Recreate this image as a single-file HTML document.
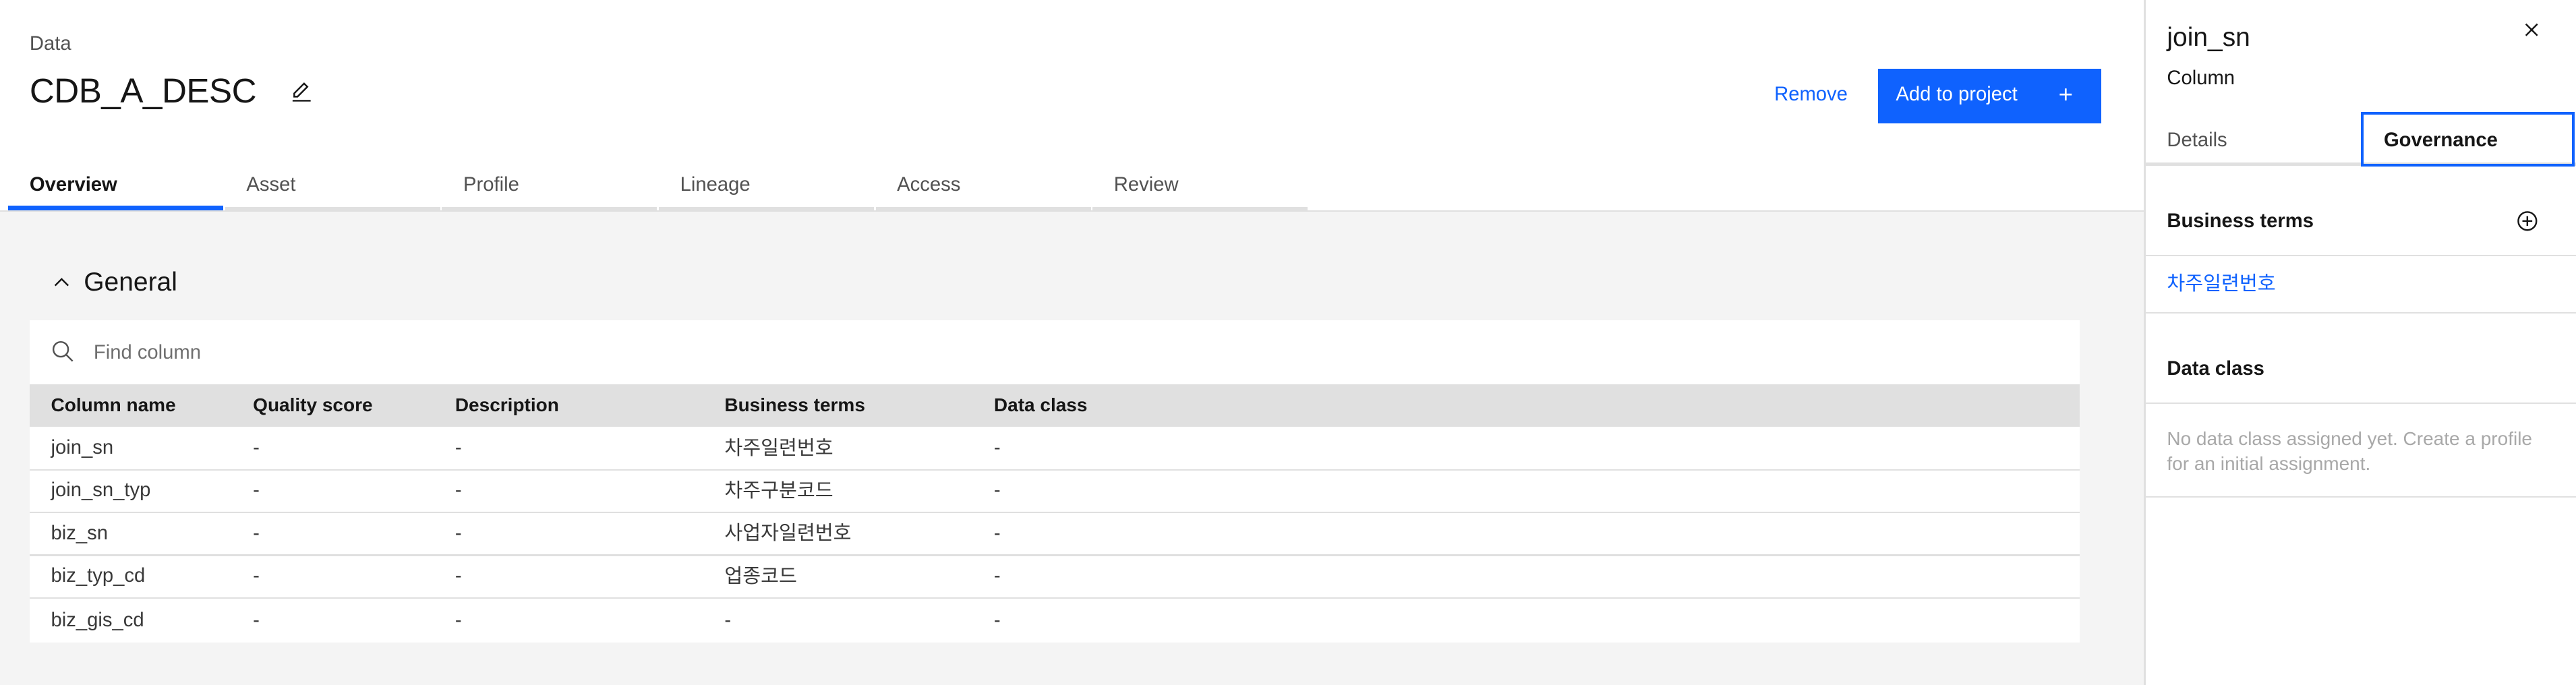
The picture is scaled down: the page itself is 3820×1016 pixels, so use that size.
<!DOCTYPE html>
<html><head><meta charset="utf-8"><style>
html,body{margin:0;padding:0;}
body{width:1568px;height:416.2px;zoom:2.43622;overflow:hidden;position:relative;background:#fff;font-family:"Liberation Sans","Noto Sans CJK KR",sans-serif;color:#161616;}
.a{position:absolute;white-space:nowrap;}
.gray{background:#f4f4f4;}
.ko{font-family:"Liberation Sans","Noto Sans CJK KR",sans-serif;}
</style></head><body>
<div class="a" style="left:18px;top:20px;font-size:12px;color:#525252">Data</div>
<div class="a" style="left:18px;top:43px;font-size:21px;letter-spacing:-0.2px">CDB_A_DESC</div>
<svg class="a" style="left:176px;top:49px" width="14" height="14" viewBox="0 0 14 14"><path d="M3 10 L3 8 L9 2 L11 4 L5 10 Z" fill="none" stroke="#161616" stroke-width="1"/><line x1="2" y1="12.5" x2="13" y2="12.5" stroke="#161616" stroke-width="1"/></svg>
<div class="a" style="left:1080px;top:51px;font-size:12px;color:#0f62fe">Remove</div>
<div class="a" style="left:1143px;top:42px;width:136px;height:33px;background:#0f62fe"></div>
<div class="a" style="left:1154px;top:51px;font-size:12px;color:#fff">Add to project</div>
<div class="a" style="left:1253px;top:49px;font-size:15px;color:#fff">+</div>
<div class="a" style="left:0;top:128px;width:1305px;height:1px;background:#e0e0e0"></div>
<div class="a" style="left:5px;top:125px;width:131px;height:3px;background:#0f62fe"></div>
<div class="a" style="left:137px;top:126px;width:131px;height:2px;background:#e0e0e0"></div>
<div class="a" style="left:269px;top:126px;width:131px;height:2px;background:#e0e0e0"></div>
<div class="a" style="left:401px;top:126px;width:131px;height:2px;background:#e0e0e0"></div>
<div class="a" style="left:533px;top:126px;width:131px;height:2px;background:#e0e0e0"></div>
<div class="a" style="left:665px;top:126px;width:131px;height:2px;background:#e0e0e0"></div>
<div class="a" style="left:18px;top:106px;font-size:12px;font-weight:bold">Overview</div>
<div class="a" style="left:150px;top:106px;font-size:12px;color:#525252">Asset</div>
<div class="a" style="left:282px;top:106px;font-size:12px;color:#525252">Profile</div>
<div class="a" style="left:414px;top:106px;font-size:12px;color:#525252">Lineage</div>
<div class="a" style="left:546px;top:106px;font-size:12px;color:#525252">Access</div>
<div class="a" style="left:678px;top:106px;font-size:12px;color:#525252">Review</div>
<div class="a gray" style="left:0;top:129px;width:1305px;height:288px"></div>
<svg class="a" style="left:32px;top:168px" width="11" height="8" viewBox="0 0 11 8"><path d="M1.5 6 L5.5 2 L9.5 6" fill="none" stroke="#161616" stroke-width="1"/></svg>
<div class="a" style="left:51px;top:163px;font-size:16px">General</div>
<div class="a" style="left:18px;top:195px;width:1248px;height:196px;background:#fff"></div>
<svg class="a" style="left:31px;top:207px" width="14" height="14" viewBox="0 0 14 14"><circle cx="5.8" cy="5.8" r="4.5" fill="none" stroke="#525252" stroke-width="1"/><line x1="9" y1="9" x2="13" y2="13" stroke="#525252" stroke-width="1"/></svg>
<div class="a" style="left:57px;top:208px;font-size:12px;color:#6f6f6f">Find column</div>
<div class="a" style="left:18px;top:234px;width:1248px;height:26px;background:#e0e0e0"></div>
<div style="font-size:11.5px;font-weight:bold">
<div class="a" style="left:31px;top:240px">Column name</div>
<div class="a" style="left:154px;top:240px">Quality score</div>
<div class="a" style="left:277px;top:240px">Description</div>
<div class="a" style="left:441px;top:240px">Business terms</div>
<div class="a" style="left:605px;top:240px">Data class</div>
</div>
<div class="a" style="left:18px;top:285.5px;width:1248px;height:1px;background:#e0e0e0"></div>
<div class="a" style="left:18px;top:311.5px;width:1248px;height:1px;background:#e0e0e0"></div>
<div class="a" style="left:18px;top:337.5px;width:1248px;height:1px;background:#e0e0e0"></div>
<div class="a" style="left:18px;top:363.5px;width:1248px;height:1px;background:#e0e0e0"></div>
<div style="font-size:12px;color:#393939">
<div class="a" style="left:31px;top:266px">join_sn</div><div class="a" style="left:154px;top:266px">-</div><div class="a" style="left:277px;top:266px">-</div><div class="a ko" style="left:441px;top:263px">차주일련번호</div><div class="a" style="left:605px;top:266px">-</div>
<div class="a" style="left:31px;top:292px">join_sn_typ</div><div class="a" style="left:154px;top:292px">-</div><div class="a" style="left:277px;top:292px">-</div><div class="a ko" style="left:441px;top:289px">차주구분코드</div><div class="a" style="left:605px;top:292px">-</div>
<div class="a" style="left:31px;top:318px">biz_sn</div><div class="a" style="left:154px;top:318px">-</div><div class="a" style="left:277px;top:318px">-</div><div class="a ko" style="left:441px;top:315px">사업자일련번호</div><div class="a" style="left:605px;top:318px">-</div>
<div class="a" style="left:31px;top:344px">biz_typ_cd</div><div class="a" style="left:154px;top:344px">-</div><div class="a" style="left:277px;top:344px">-</div><div class="a ko" style="left:441px;top:341px">업종코드</div><div class="a" style="left:605px;top:344px">-</div>
<div class="a" style="left:31px;top:371px">biz_gis_cd</div><div class="a" style="left:154px;top:371px">-</div><div class="a" style="left:277px;top:371px">-</div><div class="a" style="left:441px;top:371px">-</div><div class="a" style="left:605px;top:371px">-</div>
</div>
<div class="a" style="left:1305px;top:0;width:1px;height:417px;background:#e0e0e0"></div>
<div class="a" style="left:1319px;top:14px;font-size:16px">join_sn</div>
<svg class="a" style="left:1536px;top:13px" width="10" height="10" viewBox="0 0 10 10"><path d="M1.5 1.5 L8.5 8.5 M8.5 1.5 L1.5 8.5" stroke="#161616" stroke-width="1"/></svg>
<div class="a" style="left:1319px;top:41px;font-size:12px">Column</div>
<div class="a" style="left:1306px;top:99px;width:262px;height:2px;background:#e0e0e0"></div>
<div class="a" style="left:1319px;top:79px;font-size:12px;color:#525252">Details</div>
<div class="a" style="left:1437px;top:68px;width:127px;height:30px;border:2px solid #0f62fe"></div>
<div class="a" style="left:1451px;top:79px;font-size:12px;font-weight:bold">Governance</div>
<div class="a" style="left:1319px;top:128px;font-size:12px;font-weight:bold">Business terms</div>
<svg class="a" style="left:1532px;top:128px" width="13" height="13" viewBox="0 0 13 13"><circle cx="6.5" cy="6.5" r="5.5" fill="none" stroke="#161616" stroke-width="1"/><path d="M6.5 3.5 V9.5 M3.5 6.5 H9.5" stroke="#161616" stroke-width="1"/></svg>
<div class="a" style="left:1306px;top:155px;width:262px;height:1px;background:#e0e0e0"></div>
<div class="a ko" style="left:1319px;top:163px;font-size:12px;color:#0f62fe">차주일련번호</div>
<div class="a" style="left:1306px;top:190px;width:262px;height:1px;background:#e0e0e0"></div>
<div class="a" style="left:1319px;top:218px;font-size:12px;font-weight:bold">Data class</div>
<div class="a" style="left:1306px;top:245px;width:262px;height:1px;background:#e0e0e0"></div>
<div class="a" style="left:1319px;top:260px;font-size:11.5px;color:#a8a8a8;line-height:15px">No data class assigned yet. Create a profile<br>for an initial assignment.</div>
<div class="a" style="left:1306px;top:302px;width:262px;height:1px;background:#e0e0e0"></div>
</body></html>
